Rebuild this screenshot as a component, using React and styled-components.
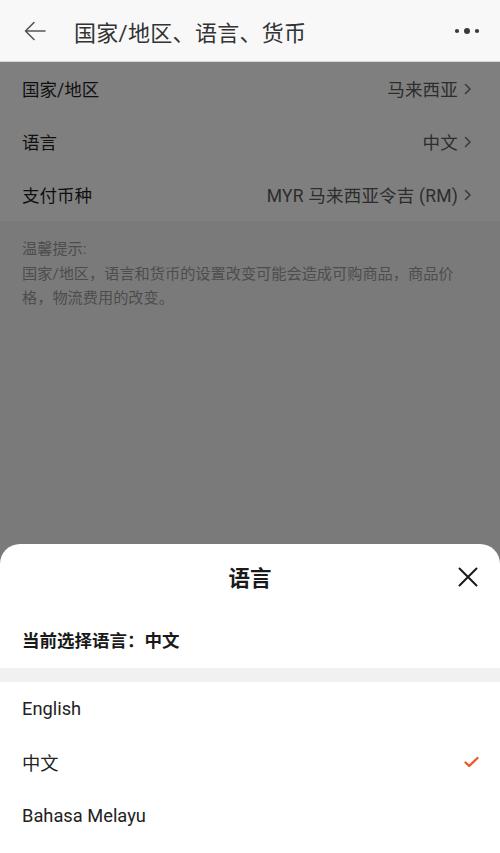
import React from 'react';
import styled, { createGlobalStyle } from 'styled-components';

const GlobalStyle = createGlobalStyle`
  html, body {
    margin: 0;
    padding: 0;
    background: #f5f5f5;
  }
  body {
    font-family: Roboto, "Noto Sans CJK SC", sans-serif;
  }
`;

const Page = styled.div`
  position: relative;
  width: 500px;
  height: 853px;
  overflow: hidden;
  background: #f5f5f5;
  display: flex;
  flex-direction: column;
`;

const Header = styled.header`
  height: 61px;
  flex-shrink: 0;
  display: flex;
  align-items: center;
  padding: 0 18px 0 22px;
  background: #f8f8f8;
  border-bottom: 1px solid #d6d6d6;
`;

const IconButton = styled.div`
  display: flex;
  align-items: center;
  justify-content: center;
  width: ${(p) => p.$w || 28}px;
  height: 28px;
`;

const HeaderTitle = styled.h1`
  flex: 1;
  margin: 0 0 0 26px;
  font-size: 22px;
  font-weight: 400;
  color: #333;
  letter-spacing: 0.3px;
`;

const List = styled.div`
  background: #fff;
`;

const Row = styled.div`
  height: 53px;
  display: flex;
  align-items: center;
  justify-content: space-between;
  padding: 0 28px 0 22px;
  font-size: 17.5px;
  color: #1f1f1f;
`;

const Value = styled.span`
  display: flex;
  align-items: center;
  gap: 6px;
  color: #5a5a5a;
  letter-spacing: 0.2px;
`;

const Tips = styled.div`
  padding: 16px 40px 0 22px;
  font-size: 15.2px;
  line-height: 24.5px;
  color: #9a9a9a;
`;

const Overlay = styled.div`
  position: absolute;
  top: 62px;
  left: 0;
  right: 0;
  bottom: 0;
  background: rgba(0, 0, 0, 0.5);
`;

const Sheet = styled.div`
  position: absolute;
  left: 0;
  right: 0;
  bottom: 0;
  height: 309px;
  background: #fff;
  border-radius: 20px 20px 0 0;
  display: flex;
  flex-direction: column;
`;

const SheetHeader = styled.div`
  height: 66px;
  display: flex;
  align-items: center;
  justify-content: center;
  position: relative;
`;

const SheetTitle = styled.h2`
  margin: 0 0 2px;
  font-size: 21.5px;
  font-weight: 700;
  color: #1a1a1a;
`;

const CloseButton = styled.div`
  position: absolute;
  right: 22px;
  top: 23px;
  width: 20px;
  height: 20px;
`;

const Current = styled.div`
  height: 58px;
  display: flex;
  align-items: center;
  padding: 0 22px;
  font-size: 17.5px;
  font-weight: 700;
  color: #1a1a1a;
`;

const Divider = styled.div`
  height: 14px;
  background: #f1f1f1;
`;

const Option = styled.div`
  height: 53.5px;
  display: flex;
  align-items: center;
  justify-content: space-between;
  padding: 0 21px 0 22px;
  font-size: 18.3px;
  color: #222;
`;

const BackArrow = () => (
  <svg width="22" height="20" viewBox="0 0 22 20" fill="none">
    <path d="M21 10H2M10 1.5L1.5 10L10 18.5" stroke="#555" strokeWidth="1.6" strokeLinecap="round" strokeLinejoin="round" />
  </svg>
);

const MoreDots = () => (
  <svg width="26" height="8" viewBox="0 0 26 8">
    <circle cx="3" cy="4" r="2.1" fill="#3a3a3a" />
    <circle cx="13" cy="4" r="3" fill="#3a3a3a" />
    <circle cx="23" cy="4" r="2.1" fill="#3a3a3a" />
  </svg>
);

const Chevron = () => (
  <svg width="8" height="12" viewBox="0 0 8 12" fill="none">
    <path d="M1.5 1.5L6 6L1.5 10.5" stroke="#777" strokeWidth="1.6" strokeLinecap="round" strokeLinejoin="round" />
  </svg>
);

const CloseIcon = () => (
  <svg width="20" height="20" viewBox="0 0 20 20" fill="none">
    <path d="M1.5 1.5L18.5 18.5M18.5 1.5L1.5 18.5" stroke="#1a1a1a" strokeWidth="2" strokeLinecap="round" />
  </svg>
);

const Check = () => (
  <svg width="15" height="12" viewBox="0 0 15 12" fill="none">
    <path d="M1.5 6.5L5.2 10L13.5 2" stroke="#ee5a2a" strokeWidth="2.4" strokeLinecap="round" strokeLinejoin="round" />
  </svg>
);

const settings = [
  { label: '国家/地区', value: '马来西亚' },
  { label: '语言', value: '中文' },
  { label: '支付币种', value: 'MYR 马来西亚令吉 (RM)' },
];

const languages = [
  { name: 'English' },
  { name: '中文', selected: true },
  { name: 'Bahasa Melayu' },
];

export default function App() {
  return (
    <Page>
      <GlobalStyle />
      <Header>
        <IconButton $w={26}>
          <BackArrow />
        </IconButton>
        <HeaderTitle>国家/地区、语言、货币</HeaderTitle>
        <IconButton $w={30}>
          <MoreDots />
        </IconButton>
      </Header>

      <List>
        {settings.map((s) => (
          <Row key={s.label}>
            <span>{s.label}</span>
            <Value>
              {s.value}
              <Chevron />
            </Value>
          </Row>
        ))}
      </List>

      <Tips>
        温馨提示:
        <br />
        国家/地区，语言和货币的设置改变可能会造成可购商品，商品价格，物流费用的改变。
      </Tips>

      <Overlay />

      <Sheet>
        <SheetHeader>
          <SheetTitle>语言</SheetTitle>
          <CloseButton>
            <CloseIcon />
          </CloseButton>
        </SheetHeader>
        <Current>当前选择语言：中文</Current>
        <Divider />
        {languages.map((l) => (
          <Option key={l.name}>
            <span>{l.name}</span>
            {l.selected && <Check />}
          </Option>
        ))}
      </Sheet>
    </Page>
  );
}
